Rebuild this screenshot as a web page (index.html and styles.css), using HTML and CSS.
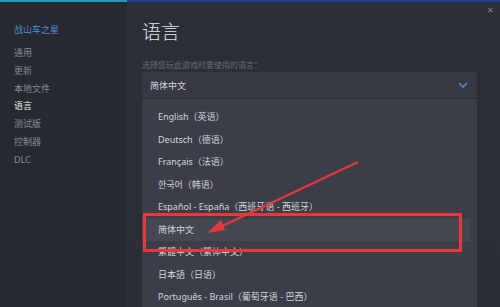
FILE: index.html
```html
<!DOCTYPE html>
<html lang="zh-CN">
<head>
    <meta charset="UTF-8">
    <title>语言</title>
    <link rel="stylesheet" href="styles.css">
</head>
<body>
    <div class="window">
        <!-- Sidebar -->
        <nav class="sidebar">
            <div class="game-title">战山车之星</div>
            <div class="nav-item">通用</div>
            <div class="nav-item">更新</div>
            <div class="nav-item">本地文件</div>
            <div class="nav-item active">语言</div>
            <div class="nav-item">测试版</div>
            <div class="nav-item">控制器</div>
            <div class="nav-item">DLC</div>
        </nav>

        <!-- Main panel -->
        <main class="main">
            <span class="close">&#x2715;</span>
            <h1>语言</h1>
            <p class="hint">选择您玩此游戏时要使用的语言：</p>
            <div class="select">
                <span>简体中文</span>
                <svg class="chevron" width="10" height="6" viewBox="0 0 10 6"><path d="M1 1 L5 5 L9 1" fill="none" stroke="#4d8fd6" stroke-width="1.6"/></svg>
            </div>
            <ul class="options">
                <li>English（英语）</li>
                <li>Deutsch（德语）</li>
                <li>Français（法语）</li>
                <li>한국어（韩语）</li>
                <li>Español - España（西班牙语 - 西班牙）</li>
                <li class="selected">简体中文</li>
                <li>繁體中文（繁体中文）</li>
                <li>日本語（日语）</li>
                <li>Português - Brasil（葡萄牙语 - 巴西）</li>
            </ul>
        </main>
    </div>

    <!-- Annotation overlay -->
    <div class="highlight-box"></div>
    <svg class="arrow" width="500" height="307" viewBox="0 0 500 307">
        <path d="M358 162 L218 228" stroke="#e8383d" stroke-width="2.2" fill="none"/>
        <path d="M207 233 L221 220 L225 230 Z" fill="#e8383d"/>
    </svg>
</body>
</html>
```

FILE: styles.css
```css
body {
    margin: 0;
    width: 500px;
    height: 307px;
    overflow: hidden;
    font-family: "Noto Sans", "Noto Sans CJK SC", sans-serif;
    background-color: #262930;
    color: #c7cad1;
}

.window {
    display: flex;
    height: 307px;
}

.sidebar {
    width: 127px;
    flex-shrink: 0;
    background-color: #262930;
    border-top: 2px solid #1d9cbd;
    padding: 21px 0 0 14px;
    box-sizing: border-box;
}

.game-title {
    font-size: 9px;
    color: #4f8fdb;
    line-height: 14px;
    margin-bottom: 7px;
}

.nav-item {
    font-size: 9px;
    line-height: 17.8px;
    color: #878a92;
}

.nav-item.active {
    color: #f2f3f5;
}

.main {
    position: relative;
    flex: 1;
    background: linear-gradient(180deg, #2c2f38 0%, #2b2e37 100%);
    border-top: 2px solid #233f8f;
    padding: 0 23px 0 15px;
    display: flex;
    flex-direction: column;
    overflow: hidden;
}

.main > * {
    flex-shrink: 0;
}

.close {
    position: absolute;
    top: 2px;
    right: 6px;
    font-size: 8px;
    color: #7e828a;
}

h1 {
    margin: 19px 0 0;
    font-size: 19px;
    font-weight: 300;
    line-height: 22px;
    color: #e6e7ea;
}

.hint {
    margin: 17px 0 0;
    font-size: 8px;
    line-height: 10px;
    color: #676b73;
}

.select {
    margin-top: 2px;
    height: 26px;
    background-color: #363943;
    border-bottom: 1px solid #2a2d35;
    display: flex;
    align-items: center;
    justify-content: space-between;
    padding: 0 9px 0 8px;
    font-size: 9px;
    color: #d6d8dc;
}

.chevron {
    display: block;
}

.options {
    list-style: none;
    margin: 0;
    padding: 7px 0 0;
    background-color: #3b3e48;
    flex: 1 0 auto;
    font-size: 9px;
    color: #d3d5da;
}

.options li {
    height: 22.5px;
    line-height: 22.5px;
    padding-left: 16px;
    margin-right: 7px;
}

.options li.selected {
    background-color: #454852;
}

.highlight-box {
    position: absolute;
    left: 143px;
    top: 213px;
    width: 313px;
    height: 33px;
    border: 3px solid #e8383d;
}

.arrow {
    position: absolute;
    left: 0;
    top: 0;
}
```
